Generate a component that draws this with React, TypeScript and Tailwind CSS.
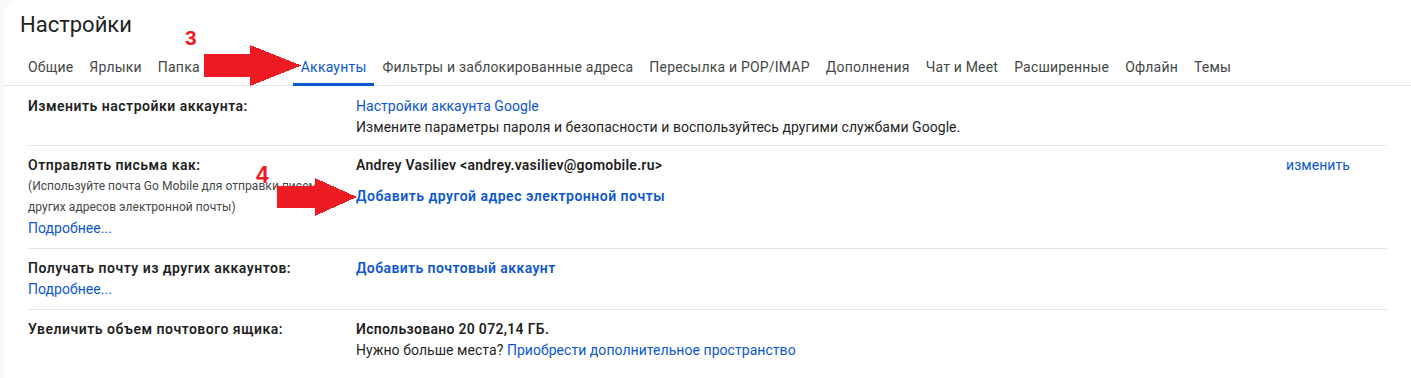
import React from 'react';

const tabs = [
  'Общие',
  'Ярлыки',
  'Папка «Входящие»',
  'Аккаунты',
  'Фильтры и заблокированные адреса',
  'Пересылка и POP/IMAP',
  'Дополнения',
  'Чат и Meet',
  'Расширенные',
  'Офлайн',
  'Темы',
];

function Arrow({ className, w, h }: { className: string; w: number; h: number }) {
  // red annotation arrow: shaft + triangular head
  const mid = h / 2;
  const headX = w * 0.48;
  return (
    <svg className={className} width={w} height={h} viewBox={`0 0 ${w} ${h}`} shapeRendering="crispEdges">
      <rect x={2} y={mid - h * 0.27} width={headX - 2} height={h * 0.54} fill="#ed1c24" />
      <polygon points={`${headX},1 ${w - 1},${mid} ${headX},${h - 1}`} fill="#ed1c24" />
    </svg>
  );
}

export default function App() {
  return (
    <div className="min-h-[378px] bg-[#f6f8fc] pl-1 font-['Roboto',_'Liberation_Sans',_sans-serif] text-[14px] text-[#1f1f1f] overflow-hidden">
      <div className="relative bg-white rounded-tl-2xl min-h-[378px]">
        <div className="pl-4 pt-[9px]">
          <h1 className="text-[22px] leading-8 font-normal text-[#1f1f1f]">Настройки</h1>
        </div>

        <div className="flex pl-4 border-b border-[#e3e3e3] whitespace-nowrap tracking-[0.2px]">
          {tabs.map((t) => (
            <div
              key={t}
              className={
                t === 'Аккаунты'
                  ? 'px-2 pt-4 pb-[6px] leading-5 border-b-[3px] border-[#0b57d0] text-[#0b57d0] -mb-px'
                  : 'px-2 pt-4 pb-[6px] leading-5 border-b-[3px] border-transparent text-[#444746] -mb-px'
              }
            >
              {t}
            </div>
          ))}
        </div>

        <div className="pl-6 pr-6 pt-px leading-[21px] tracking-[0.05px]">
          <div className="flex pt-[9px] pb-[7px] border-b border-[#e3e3e3]">
            <div className="w-[328px] shrink-0 font-semibold tracking-[0.5px]">Изменить настройки аккаунта:</div>
            <div className="flex-1">
              <div className="text-[#0b57d0]">Настройки аккаунта Google</div>
              <div>Измените параметры пароля и безопасности и воспользуйтесь другими службами Google.</div>
            </div>
          </div>

          <div className="flex pt-[9px] pb-[9px] border-b border-[#e3e3e3]">
            <div className="w-[328px] shrink-0">
              <div className="font-semibold tracking-[0.5px]">Отправлять письма как:</div>
              <div className="text-[12px] text-[#444746] w-[305px]">
                (Используйте почта Go Mobile для отправки писем с других адресов электронной почты)
              </div>
              <div className="text-[#0b57d0]">Подробнее...</div>
            </div>
            <div className="flex-1">
              <div className="font-semibold tracking-[0.25px]">Andrey Vasiliev &lt;andrey.vasiliev@gomobile.ru&gt;</div>
              <div className="mt-[10px] font-semibold tracking-[0.5px] text-[#0b57d0]">Добавить другой адрес электронной почты</div>
            </div>
            <div className="w-[101px] shrink-0 text-[#0b57d0]">изменить</div>
          </div>

          <div className="flex pt-[9px] pb-[9px] border-b border-[#e3e3e3]">
            <div className="w-[328px] shrink-0">
              <div className="font-semibold tracking-[0.5px]">Получать почту из других аккаунтов:</div>
              <div className="text-[#0b57d0]">Подробнее...</div>
            </div>
            <div className="flex-1 font-semibold tracking-[0.4px] text-[#0b57d0]">Добавить почтовый аккаунт</div>
          </div>

          <div className="flex pt-[9px] pb-[9px]">
            <div className="w-[328px] shrink-0 font-semibold tracking-[0.5px]">Увеличить объем почтового ящика:</div>
            <div className="flex-1">
              <div className="font-semibold tracking-[0.3px]">Использовано 20 072,14 ГБ.</div>
              <div>
                Нужно больше места? <span className="text-[#0b57d0]">Приобрести дополнительное пространство</span>
              </div>
            </div>
          </div>
        </div>

        {/* red annotations */}
        <div className="absolute left-[181px] top-[24px] font-['Liberation_Sans',_sans-serif] font-bold text-[21px] leading-[28px] text-[#ed1c24]">3</div>
        <Arrow className="absolute left-[198px] top-[44px]" w={100} h={43} />
        <div className="absolute left-[252px] top-[160px] font-['Liberation_Sans',_sans-serif] font-bold text-[23px] leading-[30px] text-[#ed1c24]">4</div>
        <Arrow className="absolute left-[271px] top-[177px]" w={83} h={40} />
      </div>
    </div>
  );
}
